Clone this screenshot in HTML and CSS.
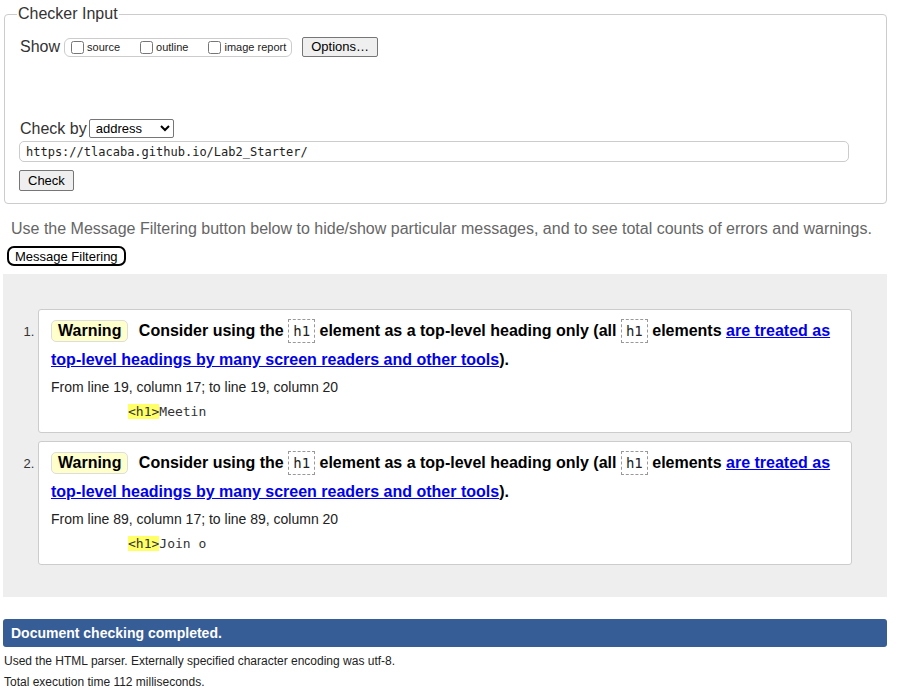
FILE: index.html
```html
<!DOCTYPE html>
<html lang="en">
<head>
<meta charset="utf-8">
<title>Nu Html Checker</title>
<link rel="stylesheet" href="styles.css">
</head>
<body>
<form class="checker">
  <fieldset class="fs">
    <legend class="legend">Checker Input</legend>
    <div class="show-row">
      <span class="lbl">Show</span>
      <span class="opts">
        <label class="opt"><input type="checkbox">source</label>
        <label class="opt"><input type="checkbox">outline</label>
        <label class="opt"><input type="checkbox">image report</label>
      </span>
      <button type="button" class="btn">Options…</button>
    </div>
    <div class="checkby-row">
      <span class="lbl">Check by</span>
      <select class="sel"><option>address</option></select>
    </div>
    <input class="url" type="text" value="https://tlacaba.github.io/Lab2_Starter/">
    <div class="check-row"><button type="button" class="btn">Check</button></div>
  </fieldset>
</form>
<p class="hint">Use the Message Filtering button below to hide/show particular messages, and to see total counts of errors and warnings.</p>
<button type="button" class="filter-btn">Message Filtering</button>
<div class="results">
  <ol class="msgs">
    <li class="msg">
      <p class="text"><span class="badge">Warning</span> Consider using the <code class="tag">h1</code> element as a top-level heading only (all <code class="tag">h1</code> elements <a class="lnk" href="#">are treated as top-level headings by many screen readers and other tools</a>).</p>
      <p class="loc">From line 19, column 17; to line 19, column 20</p>
      <p class="extract"><code><b class="hl">&lt;h1&gt;</b>Meetin</code></p>
    </li>
    <li class="msg">
      <p class="text"><span class="badge">Warning</span> Consider using the <code class="tag">h1</code> element as a top-level heading only (all <code class="tag">h1</code> elements <a class="lnk" href="#">are treated as top-level headings by many screen readers and other tools</a>).</p>
      <p class="loc">From line 89, column 17; to line 89, column 20</p>
      <p class="extract"><code><b class="hl">&lt;h1&gt;</b>Join o</code></p>
    </li>
  </ol>
</div>
<p class="done">Document checking completed.</p>
<p class="foot">Used the HTML parser. Externally specified character encoding was utf-8.</p>
<p class="foot">Total execution time 112 milliseconds.</p>
</body>
</html>
```

FILE: styles.css
```css
html, body {
  margin: 0;
  padding: 0;
  background: #fff;
}
body {
  font-family: "Liberation Sans", Arial, sans-serif;
  color: #222;
  padding: 5px 11px 0 3px;
}
.checker {
  margin: 0 0 0 1px;
}
.fs {
  margin: 0;
  border: 1px solid #ccc;
  border-radius: 4px;
  padding: 0 14px 12px 14px;
}
.legend {
  font-size: 16px;
  line-height: 18px;
  color: #333;
  padding: 0 1px;
  margin-left: -2px;
}
.lbl {
  font-size: 16px;
  color: #333;
}
.show-row {
  display: flex;
  align-items: center;
  margin-top: 14px;
  height: 20px;
}
.show-row .lbl {
  margin-left: 1px;
  margin-right: 4px;
}
.opts {
  display: inline-flex;
  align-items: center;
  border: 1px solid #ccc;
  border-radius: 6px;
  height: 17px;
  padding: 0 5px 0 6px;
}
.opt {
  display: inline-flex;
  align-items: center;
  font-size: 11px;
  color: #222;
  margin-right: 20px;
}
.opt:last-child {
  margin-right: 0;
}
.opt input {
  margin: 0 3px 0 0;
  width: 13px;
  height: 13px;
}
.btn {
  font-family: "Liberation Sans", Arial, sans-serif;
  font-size: 13px;
  background: #efefef;
  border: 1px solid #767676;
  border-radius: 2px;
  color: #000;
  padding: 1px 6px;
  height: 20px;
  line-height: 16px;
}
.show-row .btn {
  margin-left: 10px;
  padding: 1px 8px;
}
.checkby-row {
  display: flex;
  align-items: center;
  margin-top: 62px;
  height: 19px;
}
.checkby-row .lbl {
  margin-left: 1px;
  margin-right: 2px;
}
.sel {
  font-family: "Liberation Sans", Arial, sans-serif;
  font-size: 13px;
  width: 85px;
  height: 19px;
  padding: 0 0 0 2px;
  border: 1px solid #767676;
  border-radius: 2px;
  background: #fff;
  color: #000;
}
.url {
  display: block;
  box-sizing: border-box;
  width: 830px;
  height: 21px;
  margin-top: 3px;
  padding: 0 6px;
  border: 1px solid #ccc;
  border-radius: 5px;
  font-family: "DejaVu Sans Mono", "Liberation Mono", monospace;
  font-size: 12px;
  color: #222;
}
.check-row {
  margin-top: 8px;
}
.check-row .btn {
  height: 21px;
  padding: 1px 8px;
}
.hint {
  font-size: 16px;
  line-height: 18px;
  color: #666;
  margin: 16px 0 0 8px;
}
.filter-btn {
  display: block;
  margin: 8px 0 0 4px;
  font-family: "Liberation Sans", Arial, sans-serif;
  font-size: 13px;
  line-height: 15px;
  height: 20px;
  padding: 0 6px;
  background: #fff;
  color: #000;
  border: 2px solid #000;
  border-radius: 7px;
}
.results {
  background: #eee;
  margin-top: 8px;
  padding: 35px 35px 32px 35px;
}
.msgs {
  margin: 0;
  padding: 0;
  list-style: decimal outside;
  color: #333;
  font-size: 13px;
}
.msg {
  background: #fff;
  border: 1px solid #ccc;
  border-radius: 3px;
  padding: 6px 12px 11px 12px;
  margin-bottom: 8px;
}
.msg:last-child {
  margin-bottom: 0;
}
.text {
  margin: 0;
  font-size: 16px;
  line-height: 29px;
  font-weight: bold;
  color: #000;
}
.badge {
  display: inline-block;
  line-height: 20px;
  padding: 0 6px;
  background: #ffc;
  border: 1px solid #ddd;
  border-radius: 5px;
  margin-right: 6px;
}
.tag {
  font-family: "DejaVu Sans Mono", "Liberation Mono", monospace;
  font-weight: normal;
  font-size: 14px;
  line-height: 22px;
  display: inline-block;
  padding: 0 4px;
  border: 1px dashed #999;
  color: #222;
}
.lnk {
  color: #00e;
  text-decoration: underline;
}
.loc {
  margin: 3px 0 0 0;
  font-size: 14px;
  line-height: 20px;
  color: #222;
}
.extract {
  margin: 6px 0 0 77px;
  line-height: 18px;
}
.extract code {
  font-family: "DejaVu Sans Mono", "Liberation Mono", monospace;
  font-size: 13px;
  color: #333;
}
.hl {
  background: #ff6;
  font-weight: normal;
}
.done {
  margin: 22px 0 0 0;
  background: #365d95;
  color: #fff;
  font-weight: bold;
  font-size: 14px;
  line-height: 28px;
  padding: 0 8px;
  border-radius: 3px;
}
.foot {
  margin: 6px 0 0 1px;
  font-size: 12px;
  line-height: 15px;
  color: #222;
}
.done + .foot {
  margin-top: 7px;
}
```
